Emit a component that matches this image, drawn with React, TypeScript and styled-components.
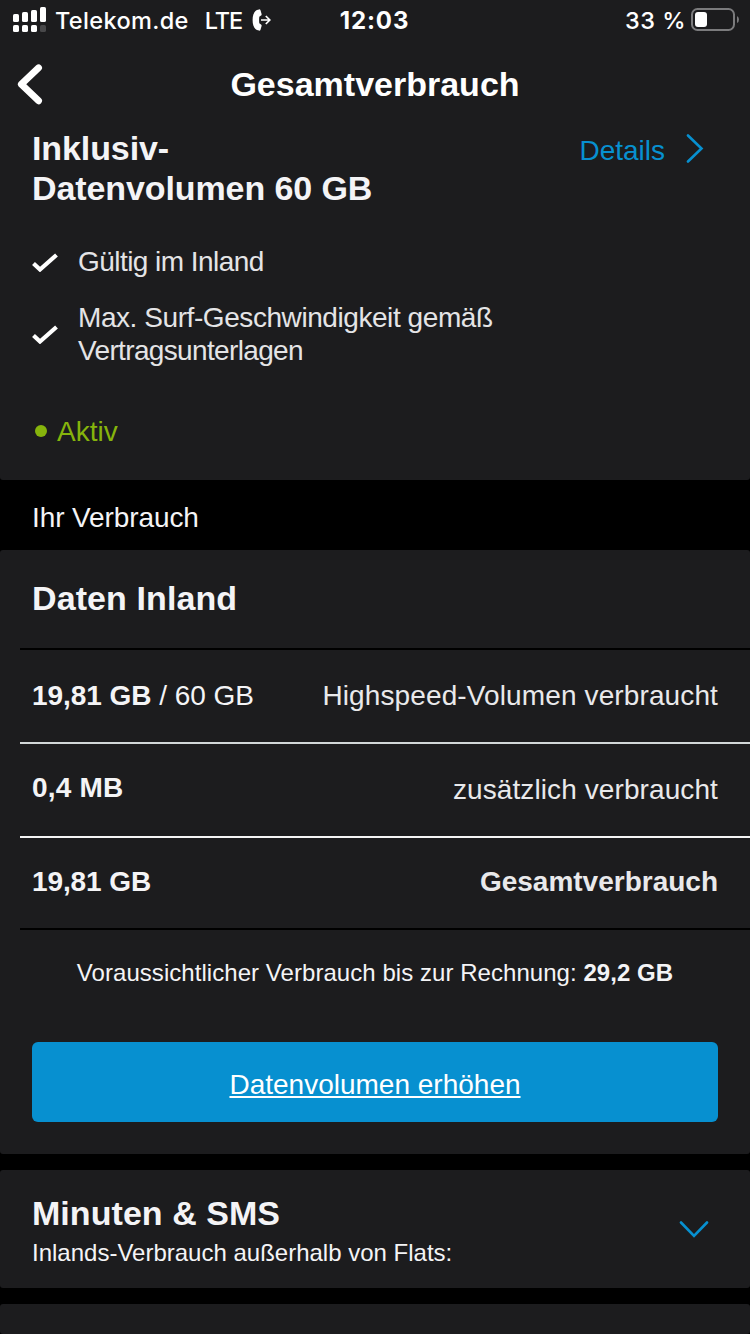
import React from "react";
import styled, { createGlobalStyle } from "styled-components";

const colors = {
  card: "#1c1c1e",
  text: "#f4f4f6",
  blue: "#0790d0",
  green: "#86b40c",
};

const GlobalStyle = createGlobalStyle`
  html, body { margin: 0; background: #000; }
  * { box-sizing: border-box; }
  body {
    font-family: "Liberation Sans", Arial, sans-serif;
    color: ${colors.text};
    height: 1334px;
    overflow: hidden;
  }
`;

const Screen = styled.main`
  width: 750px;
  height: 1334px;
  overflow: hidden;
  display: flex;
  flex-direction: column;
  background: #000;
`;

const StatusBar = styled.header`
  flex: none;
  display: grid;
  grid-template-columns: 1fr auto 1fr;
  align-items: center;
  height: 40px;
  padding: 0 11px 0 13px;
  background: ${colors.card};
  color: #fff;
  font-family: Inter, sans-serif;
  font-size: 23.5px;
  font-weight: 500;
  line-height: 38px;
`;

const StatusLeft = styled.div`
  display: flex;
  align-items: center;
  white-space: nowrap;
`;

const StatusRight = styled(StatusLeft)`
  justify-content: flex-end;
  gap: 5px;
`;

const StatusText = styled.span<{ $left?: number; $tracking?: number }>`
  padding-top: 1px;
  margin-left: ${(p) => p.$left ?? 0}px;
  letter-spacing: ${(p) => p.$tracking ?? 0}px;
`;

const Clock = styled.time`
  padding-top: 1px;
  margin-right: 3px;
  font-size: 24px;
  font-weight: 700;
  letter-spacing: 0.9px;
`;

const CallIcon = styled.svg`
  margin-left: 10px;
`;

const NavBar = styled.nav`
  flex: none;
  display: grid;
  grid-template-columns: 60px 1fr 60px;
  align-items: center;
  height: 88px;
  background: ${colors.card};
`;

const BackButton = styled.button`
  display: flex;
  padding: 0 0 0 14px;
  border: 0;
  background: none;
`;

const NavTitle = styled.h1`
  margin: 0;
  text-align: center;
  font-size: 34px;
  line-height: 40px;
  color: #fff;
`;

const Card = styled.section<{ $height: number; $flatTop?: boolean }>`
  flex: none;
  height: ${(p) => p.$height}px;
  background: ${colors.card};
  border-radius: ${(p) => (p.$flatTop ? "0 0 3px 3px" : "3px")};
`;

const PlanHead = styled.div`
  display: flex;
  justify-content: space-between;
  align-items: flex-start;
  height: 80px;
  padding: 0 46px 0 32px;
`;

const Heading = styled.h2<{ $tracking?: number }>`
  margin: 0;
  font-size: 34px;
  line-height: 40px;
  letter-spacing: ${(p) => p.$tracking ?? 0}px;
`;

const DetailsLink = styled.a`
  display: flex;
  align-items: center;
  gap: 21px;
  padding-top: 6px;
  color: ${colors.blue};
  font-size: 28px;
  line-height: 34px;
`;

const Features = styled.ul`
  display: flex;
  flex-direction: column;
  gap: 23px;
  list-style: none;
  margin: 37px 0 48px;
  padding: 0 32px;
`;

const Feature = styled.li`
  display: flex;
  align-items: center;
  gap: 20px;
  font-size: 28px;
  line-height: 33px;
  color: #e4e4e6;
`;

const FeatureLine = styled.span<{ $tracking: number }>`
  display: block;
  letter-spacing: ${(p) => p.$tracking}px;
`;

const Status = styled.div`
  display: flex;
  align-items: center;
  gap: 10px;
  padding-left: 35px;
  color: ${colors.green};
  font-size: 28px;
  line-height: 34px;
`;

const Dot = styled.i`
  width: 12px;
  height: 12px;
  margin-bottom: 2px;
  border-radius: 50%;
  background: currentColor;
`;

const SectionLabel = styled.div`
  flex: none;
  height: 70px;
  padding: 21px 32px 0;
  font-size: 28px;
  line-height: 34px;
  letter-spacing: -0.1px;
`;

const CardTitle = styled.div`
  height: 98px;
  padding: 28px 32px 0;
`;

const Row = styled.div<{ $height: number; $line: string; $pad?: number }>`
  display: flex;
  justify-content: space-between;
  align-items: flex-start;
  height: ${(p) => p.$height}px;
  margin-left: 20px;
  padding: ${(p) => p.$pad ?? 27}px 32px 0 12px;
  border-top: 2px solid ${(p) => p.$line};
  font-size: 28px;
  line-height: 34px;
`;

const Value = styled.span<{ $tracking?: number }>`
  letter-spacing: ${(p) => p.$tracking ?? 0}px;
`;

const Label = styled.span<{ $drop?: number; $tracking?: number }>`
  padding-top: ${(p) => p.$drop ?? 0}px;
  letter-spacing: ${(p) => p.$tracking ?? 0}px;
  color: #e9e9eb;
`;

const Forecast = styled.p`
  height: 114px;
  margin: 0 0 0 20px;
  padding: 28px 20px 0 0;
  border-top: 2px solid #000;
  text-align: center;
  font-size: 24px;
  line-height: 30px;
  letter-spacing: 0.05px;
`;

const PrimaryButton = styled.button`
  display: block;
  width: 686px;
  height: 80px;
  margin: 0 32px;
  padding: 5px 0 0;
  border: 0;
  border-radius: 6px;
  background: ${colors.blue};
  color: #fff;
  font: 28px/34px "Liberation Sans", Arial, sans-serif;
  text-decoration: underline;
  text-decoration-thickness: 2px;
  text-underline-offset: 2px;
`;

const Gap = styled.div`
  flex: none;
  height: 16px;
`;

const Accordion = styled.div`
  display: flex;
  justify-content: space-between;
  align-items: center;
  height: 118px;
  padding: 3px 40px 0 32px;
`;

const AccordionNote = styled.p`
  margin: 5px 0 0;
  font-size: 24px;
  line-height: 30px;
`;

const Check = () => (
  <svg width="26" height="20" viewBox="0 0 26 20" fill="none" stroke="#fff" strokeWidth="4.200">
    <path d="M1.500 11.500 8 17.500 24.500 3" />
  </svg>
);

const SignalIcon = () => (
  <svg width="34" height="28" viewBox="0 0 34 28" fill="#fff">
    <rect x="0" y="8" width="6" height="8" rx="1.600" />
    <rect x="9" y="6" width="6" height="10" rx="1.600" />
    <rect x="18" y="4" width="6" height="12" rx="1.600" />
    <rect x="27" y="1" width="6" height="15" rx="1.600" />
    <rect x="0" y="19" width="6" height="7" rx="1.600" />
    <rect x="9" y="19" width="6" height="7" rx="1.600" />
    <rect x="18" y="19" width="6" height="7" rx="1.600" />
    <rect x="27" y="19" width="6" height="7" rx="1.600" fill="#48484a" />
  </svg>
);

export default function App() {
  return (
    <>
      <GlobalStyle />
      <Screen>
        <StatusBar>
          <StatusLeft>
            <SignalIcon />
            <StatusText $left={8} $tracking={0.35}>Telekom.de</StatusText>
            <StatusText $left={16} $tracking={-1}>LTE</StatusText>
            <CallIcon width="20" height="22" viewBox="0 0 20 22" fill="#fff">
              <path d="M5 .9 7 .4Q8.100.2 8.500 1.200L9.600 5Q9.800 6 9 6.500L7.300 7.700Q6.900 11 7.300 14.300L9 15.500Q9.800 16 9.600 17L8.500 20.800Q8.100 21.800 7 21.600L5 21.100C1.800 19.600.6 15.600.6 11S1.800 2.400 5 .9Z" />
              <path d="M9 11h9M13.800 7l4 4-4 4" fill="none" stroke="#fff" strokeWidth="1.700" />
            </CallIcon>
          </StatusLeft>
          <Clock>12:03</Clock>
          <StatusRight>
            <StatusText $tracking={0.5}>33 %</StatusText>
            <svg width="48" height="24" viewBox="0 0 48 24">
              <rect x="1" y="1" width="42" height="21" rx="5.500" fill="none" stroke="#7b7b7d" strokeWidth="2" />
              <rect x="4" y="4" width="12" height="15" rx="3" fill="#fff" />
              <path d="M46 8q2 1 2 3.500t-2 3.500z" fill="#7b7b7d" />
            </svg>
          </StatusRight>
        </StatusBar>

        <NavBar>
          <BackButton aria-label="Zurück">
            <svg width="32" height="44" viewBox="0 0 32 44" fill="none" stroke="#fff" strokeWidth="6.800" strokeLinecap="round" strokeLinejoin="round">
              <path d="M24.600 5.800 7.300 22.300 24.600 38.800" />
            </svg>
          </BackButton>
          <NavTitle>Gesamtverbrauch</NavTitle>
        </NavBar>

        <Card $height={352} $flatTop>
          <PlanHead>
            <Heading $tracking={-0.1}>
              Inklusiv-
              <br />
              Datenvolumen 60 GB
            </Heading>
            <DetailsLink>
              Details
              <svg width="18" height="34" viewBox="0 0 18 34" fill="none" stroke={colors.blue} strokeWidth="2.600" strokeLinecap="round">
                <path d="M2 1.500 15.500 14.500 2 27.500" />
              </svg>
            </DetailsLink>
          </PlanHead>
          <Features>
            <Feature>
              <Check />
              <FeatureLine $tracking={-0.55}>Gültig im Inland</FeatureLine>
            </Feature>
            <Feature>
              <Check />
              <div>
                <FeatureLine $tracking={-0.43}>Max. Surf-Geschwindigkeit gemäß</FeatureLine>
                <FeatureLine $tracking={-0.65}>Vertragsunterlagen</FeatureLine>
              </div>
            </Feature>
          </Features>
          <Status>
            <Dot />
            Aktiv
          </Status>
        </Card>

        <SectionLabel>Ihr Verbrauch</SectionLabel>

        <Card $height={604}>
          <CardTitle>
            <Heading $tracking={0.1}>Daten Inland</Heading>
          </CardTitle>
          <Row $height={94} $line="#000" $pad={29}>
            <Value $tracking={-0.05}>
              <b>19,81 GB</b> / 60 GB
            </Value>
            <Label $tracking={0.12}>Highspeed-Volumen verbraucht</Label>
          </Row>
          <Row $height={94} $line="#d2d7d8">
            <Value $tracking={0.2}>
              <b>0,4 MB</b>
            </Value>
            <Label $drop={2} $tracking={0.1}>zusätzlich verbraucht</Label>
          </Row>
          <Row $height={92} $line="#f4f4f4">
            <Value $tracking={-0.1}>
              <b>19,81 GB</b>
            </Value>
            <Label>
              <b>Gesamtverbrauch</b>
            </Label>
          </Row>
          <Forecast>
            Voraussichtlicher Verbrauch bis zur Rechnung: <b>29,2 GB</b>
          </Forecast>
          <PrimaryButton>Datenvolumen erhöhen</PrimaryButton>
        </Card>
        <Gap />
        <Card $height={118}>
          <Accordion>
            <div>
              <Heading $tracking={0.05}>Minuten &amp; SMS</Heading>
              <AccordionNote>Inlands-Verbrauch außerhalb von Flats:</AccordionNote>
            </div>
            <svg width="32" height="20" viewBox="0 0 32 20" fill="none" stroke={colors.blue} strokeWidth="2.600" strokeLinecap="round">
              <path d="M3 1.500 16 15 29 1.500" />
            </svg>
          </Accordion>
        </Card>
        <Gap />
        <Card $height={30} />
      </Screen>
    </>
  );
}
